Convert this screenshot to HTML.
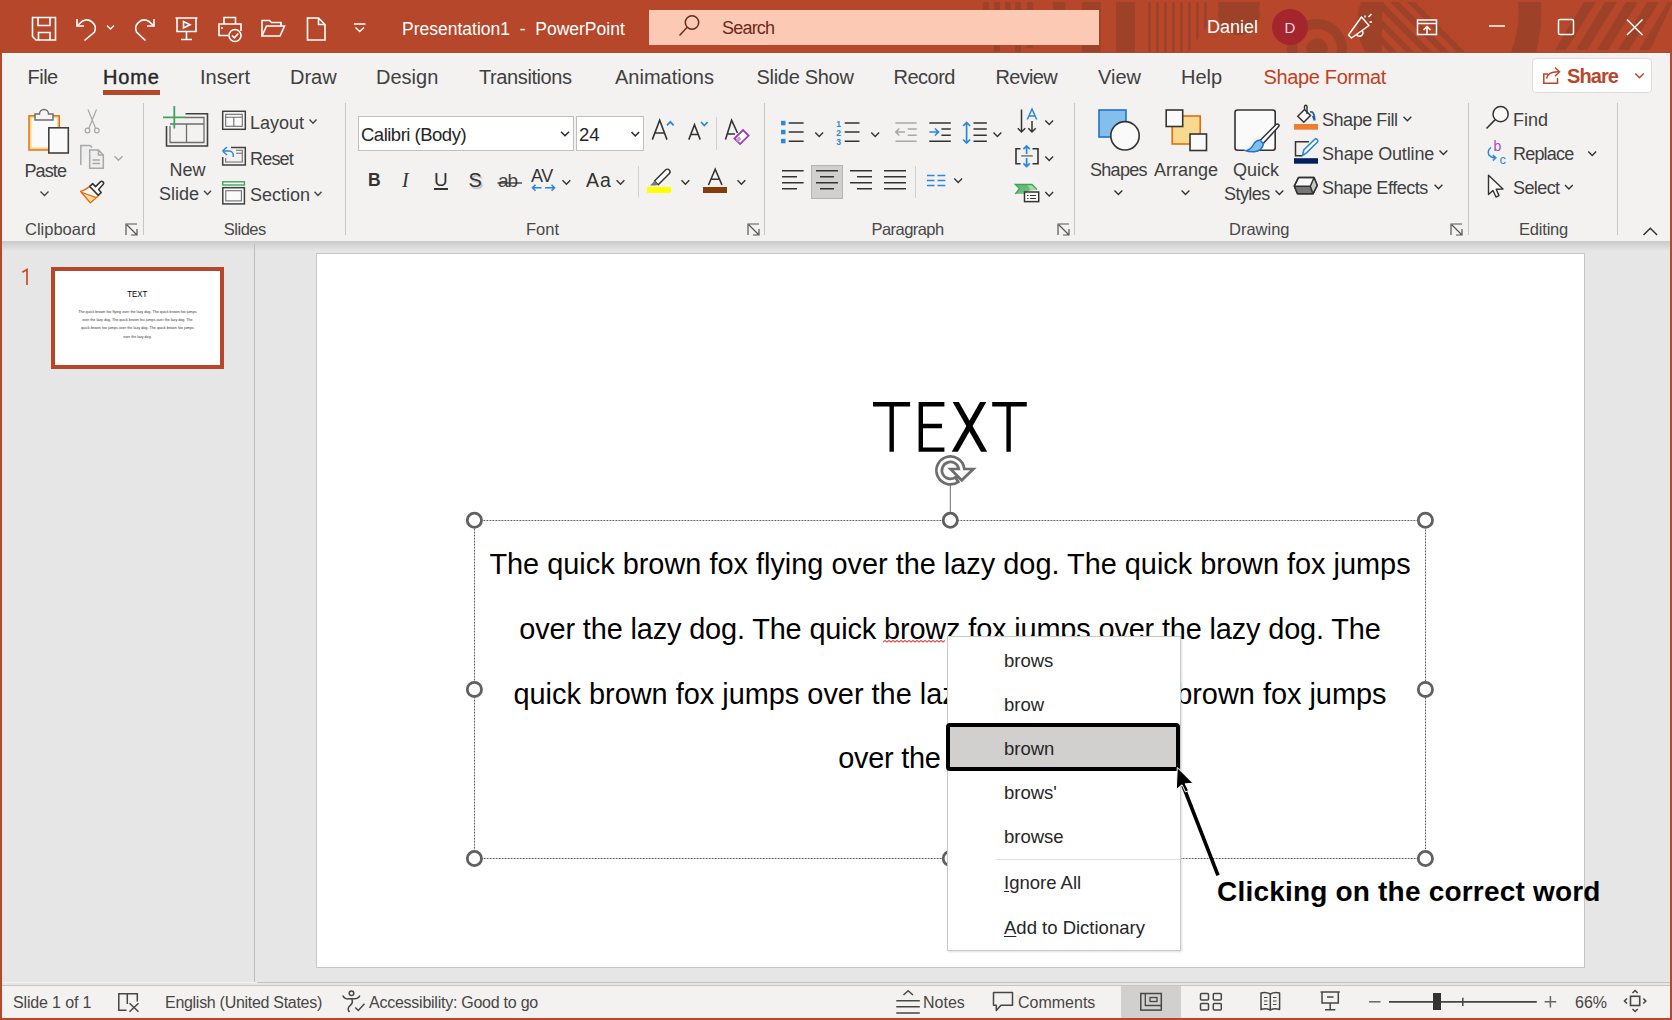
<!DOCTYPE html>
<html><head><meta charset="utf-8">
<style>
*{margin:0;padding:0;box-sizing:border-box}
html,body{width:1672px;height:1020px;overflow:hidden}
body{background:#B7472A;position:relative;font-family:"Liberation Sans",sans-serif;color:#424242}
.a{position:absolute}
.t{position:absolute;white-space:nowrap;line-height:1}
svg{position:absolute;overflow:visible}
#title{left:0;top:0;width:1672px;height:53px;background:#B7472A}
#ribbon{left:2px;top:53px;width:1668px;height:188px;background:#F3F2F1;border-top:1px solid #F9FBFB}
#main{left:2px;top:241px;width:1668px;height:741px;background:#E6E6E6}
#shadow{left:2px;top:241px;width:1668px;height:10px;background:linear-gradient(#CACACA,#E6E6E6)}
#status{left:2px;top:982px;width:1668px;height:36px;background:#F3F2F1}
.tab{font-size:20px;color:#404040;top:67px}
.lbl{font-size:16.5px;color:#484848;top:220.6px}
.rb{font-size:18px;color:#404040}
.sep{position:absolute;width:1px;background:#C8C6C4}
.mi{left:1004px;font-size:18.5px;color:#262626}
.bt{left:474px;width:952px;font-size:28.9px;text-align:center;color:#000}
.st{font-size:16px;color:#484644;top:994.5px}
</style></head>
<body>
<div id="title" class="a">
<svg style="left:0;top:0" width="1672" height="52" viewBox="0 0 1672 52">
<g fill="#9D4229">
<rect x="983.2" y="2" width="5.8" height="8"/><rect x="994" y="2" width="5.9" height="8"/><rect x="1005" y="2" width="5.8" height="8"/><rect x="1015.1" y="2" width="5.9" height="8"/><rect x="1027.1" y="2" width="5.9" height="8"/>
<polygon points="1052.5,2 1065.7,2 1065,10 1054,10"/><rect x="1082" y="2" width="18.8" height="50"/>
<rect x="994" y="44" width="5.9" height="7.5"/><rect x="1015.1" y="44" width="5.9" height="8"/><rect x="1027.1" y="44" width="5.9" height="3.7"/>
<rect x="1116" y="2" width="19" height="50"/>
<polygon points="1148,2 1150.7,2 1150.7,52 1148,52"/>
<polygon points="1156,2 1158.7,2 1158.7,52 1156,52"/>
<polygon points="1164,2 1166.7,2 1166.7,52 1164,52"/>
<polygon points="1172,2 1174.7,2 1174.7,52 1172,52"/>
<polygon points="1180,2 1182.7,2 1182.7,52 1180,52"/>
<polygon points="1188,2 1190.7,2 1190.7,49 1188,52"/>
<polygon points="1196,2 1198.7,2 1198.7,38 1196,41"/>
<polygon points="1204,2 1206.7,2 1206.7,27 1204,30"/>
<path d="M1218,2 A21,21 0 0 0 1260,2 Z M1218,2 L1260,2" />
<circle cx="1239" cy="14" r="21"/>
</g>
<g fill="none" stroke="#9D4229">
<circle cx="1317" cy="49" r="25" stroke-width="10"/>
</g>
<circle cx="1317" cy="49" r="10.7" fill="#9D4229"/>
<g fill="#9D4229">
<path d="M1361,2 L1384,2 L1382,8 L1382,52 L1365,52 Q1352,27 1361,2 Z"/>
<clipPath id="cr"><rect x="1382" y="2" width="120" height="50"/></clipPath>
<g clip-path="url(#cr)">
<polygon points="1322,2 1330,2 1380,52 1372,52"/>
<polygon points="1339,2 1347,2 1397,52 1389,52"/>
<polygon points="1356,2 1364,2 1414,52 1406,52"/>
<polygon points="1373,2 1382,2 1432,52 1423,52"/>
<polygon points="1390,2 1399,2 1449,52 1440,52"/>
<polygon points="1407,2 1415,2 1465,52 1457,52"/>
</g>
<path d="M1518,2 L1541,2 Q1543,25 1536,52 L1511,52 Q1521,25 1518,2 Z"/>
<polygon points="1584,2 1596,2 1566,50 1555,50"/>
<polygon points="1605,2 1617,2 1587,50 1576,50"/>
<polygon points="1626,2 1638,2 1608,50 1597,50"/>
<polygon points="1647,2 1659,2 1629,50 1618,50"/>
<polygon points="1668,2 1672,2 1672,4 1650,50 1639,50"/>
</g>
<rect x="0" y="0" width="1672" height="2" fill="#B7472A"/>
<rect x="1270" y="2" width="40" height="8" fill="none"/>
</svg>
<div class="a" style="left:649px;top:10px;width:450px;height:35px;background:#FCC9B4"></div>
<svg style="left:0;top:0" width="700" height="52" viewBox="0 0 700 52" fill="none" stroke="#fff" stroke-width="1.6" stroke-linejoin="miter">
<!-- save -->
<path d="M32.5,17.5 H55.5 V40 H36 L32.5,36.5 Z"/>
<path d="M38,17.5 V25.5 H50 V17.5"/>
<path d="M38.5,40 V32.5 H50 V40"/>
<!-- undo -->
<path d="M77,19 V26 H84"/>
<path d="M77,26 L82,21.5 A8.5,8.5 0 0 1 94.5,32 L84.5,40.5"/>
<path d="M107,25.5 L110.5,29 L114,25.5" stroke-width="1.3"/>
<!-- redo -->
<path d="M154,19 V26 H147"/>
<path d="M154,26 L149,21.5 A8.5,8.5 0 0 0 136.5,32 L145.5,40.5"/>
<!-- present -->
<path d="M175.5,18 H197.5 M177,18 V31.5 H196 V18 M186.5,31.5 V39.5 M181,39.5 H192"/>
<path d="M183.5,21.5 L190,24.8 L183.5,28 Z"/>
<!-- print -->
<path d="M224,24 V17.5 H235.5 V24"/>
<path d="M228,35.5 H219 V24 H241 V31"/>
<path d="M221,28 H223"/>
<circle cx="235" cy="35.5" r="6" fill="#B7472A"/>
<path d="M232,35.5 L234.3,37.8 L238.3,33.5"/>
<!-- open -->
<path d="M262,36 V20.5 H269.5 L271.5,22.5 H281 V26"/>
<path d="M262,36 L266.5,26 H284.5 L280,36 Z"/>
<!-- new -->
<path d="M307.5,18 H318.5 L325,24.5 V40 H307.5 Z M318.5,18 V24.5 H325"/>
<!-- customize -->
<path d="M354,24 H365.5" stroke-width="1.5"/>
<path d="M355.5,27.5 L359.7,31.5 L364,27.5" stroke-width="1.5"/>
<!-- search icon -->
<g stroke="#6B2A1C" stroke-width="1.5"><circle cx="692" cy="22.5" r="6.7"/><path d="M687.2,27.3 L679.5,35.5"/></g>
</svg>
<div class="t" style="left:402px;top:21px;font-size:17.5px;color:#fff">Presentation1&nbsp; - &nbsp;PowerPoint</div>
<div class="t" style="left:722px;top:18.5px;font-size:18px;color:#6B2A1C;letter-spacing:-0.8px">Search</div>
<div class="t" style="left:1207px;top:18px;font-size:18px;color:#fff">Daniel</div>
<div class="a" style="left:1272px;top:9px;width:36px;height:36px;border-radius:50%;background:#A4262C"></div>
<div class="t" style="left:1284.5px;top:20.3px;font-size:15px;color:#F4D7E4">D</div>
<svg style="left:1300px;top:0" width="372" height="52" viewBox="1300 0 372 52" fill="none" stroke="#fff" stroke-width="1.5">
<!-- megaphone -->
<path d="M1348.5,35 L1361.5,17 L1369,25.5 L1351.5,38 Z" stroke-linejoin="round"/>
<path d="M1356.5,34.5 A3.2,3.2 0 1 0 1362.5,31"/>
<path d="M1365,15.5 V17.5 M1368.5,17 L1371.5,14 M1369.5,22 H1372"/>
<!-- ribbon display -->
<path d="M1417.5,20 H1436.5 V34.5 H1417.5 Z M1417.5,23.5 H1436.5"/>
<path d="M1427,34.5 V26.5 M1423.5,30 L1427,26.5 L1430.5,30"/>
<!-- min -->
<path d="M1489,26 H1505"/>
<!-- max -->
<rect x="1558.5" y="19.5" width="15" height="15" rx="1.5"/>
<!-- close -->
<path d="M1627,19.5 L1642.5,35 M1642.5,19.5 L1627,35"/>
</svg>
</div>
<div id="ribbon" class="a"></div>
<div class="t tab" style="left:27.5px;letter-spacing:-0.5px">File</div>
<div class="t tab" style="left:103px;color:#262626;letter-spacing:0.8px;-webkit-text-stroke:0.4px #262626">Home</div>
<div class="a" style="left:103px;top:90px;width:57px;height:5px;background:#B7472A"></div>
<div class="t tab" style="left:200px">Insert</div>
<div class="t tab" style="left:290px">Draw</div>
<div class="t tab" style="left:376px">Design</div>
<div class="t tab" style="left:479px;letter-spacing:-0.4px">Transitions</div>
<div class="t tab" style="left:615px">Animations</div>
<div class="t tab" style="left:756.5px;letter-spacing:-0.3px">Slide Show</div>
<div class="t tab" style="left:893.5px;letter-spacing:-0.5px">Record</div>
<div class="t tab" style="left:995.5px;letter-spacing:-0.66px">Review</div>
<div class="t tab" style="left:1098px">View</div>
<div class="t tab" style="left:1181px">Help</div>
<div class="t tab" style="left:1263.5px;color:#C43E1C;letter-spacing:-0.35px">Shape Format</div>
<div class="a" style="left:1531.5px;top:57.5px;width:120px;height:35px;background:#fff;border:1px solid #DEDCDA;border-radius:4px"></div>
<div class="t" style="left:1567px;top:65.5px;font-size:20px;font-weight:bold;color:#B7472A;letter-spacing:-0.9px">Share</div>
<svg style="left:1500px;top:50px" width="172" height="50" viewBox="1500 50 172 50" fill="none" stroke="#B7472A" stroke-width="1.5">
<path d="M1548,74 H1543.8 V83.2 H1557.5 V78"/>
<path d="M1546.5,78.5 Q1548,71.5 1558.5,71.8"/>
<path d="M1555,67.5 L1559.5,71.8 L1555,76.2"/>
<path d="M1635.3,73.5 L1639.5,77.7 L1643.7,73.5"/>
</svg>
<!--TABS-->
<!-- separators -->
<div class="sep" style="left:143px;top:103px;height:132px"></div>
<div class="sep" style="left:345px;top:103px;height:132px"></div>
<div class="sep" style="left:764px;top:103px;height:132px"></div>
<div class="sep" style="left:1074px;top:103px;height:132px"></div>
<div class="sep" style="left:1468px;top:103px;height:132px"></div>
<div class="sep" style="left:1617px;top:103px;height:132px"></div>
<!-- group labels -->
<div class="t lbl" style="left:25px">Clipboard</div>
<div class="t lbl" style="left:223.8px;letter-spacing:-0.5px">Slides</div>
<div class="t lbl" style="left:526px">Font</div>
<div class="t lbl" style="left:871.5px;letter-spacing:-0.55px">Paragraph</div>
<div class="t lbl" style="left:1229px">Drawing</div>
<div class="t lbl" style="left:1519px;letter-spacing:-0.2px">Editing</div>
<!-- clipboard + slides text -->
<div class="t rb" style="left:24.5px;top:162px;letter-spacing:-0.9px">Paste</div>
<div class="t rb" style="left:169.5px;top:161.4px">New</div>
<div class="t rb" style="left:159px;top:184.8px">Slide</div>
<div class="t rb" style="left:250px;top:114px">Layout</div>
<div class="t rb" style="left:250px;top:149.8px;letter-spacing:-0.8px">Reset</div>
<div class="t rb" style="left:250px;top:186.4px">Section</div>
<svg style="left:0;top:0" width="350" height="250" viewBox="0 0 350 250" fill="none">
<!-- launcher -->
<g stroke="#555" stroke-width="1.2"><path d="M126,235 V224 H137 M127,225 L137,235 M131,235 H137 V229"/></g>
<!-- paste -->
<rect x="29" y="115.8" width="30.3" height="34.2" fill="#F8D98C" stroke="#E46C0A" stroke-width="1.4"/>
<rect x="31.5" y="118" width="25.5" height="29.5" fill="#FAFAFA"/>
<path d="M35,120 V114 H39.5 A4.5,4.5 0 0 1 48.5,114 H53 V120 Z" fill="#F5F5F5" stroke="#6E6E6E" stroke-width="1.5"/>
<rect x="48.8" y="127.8" width="19.5" height="25.2" fill="#FAFAFA" stroke="#404040" stroke-width="1.6"/>
<!-- chevrons -->
<g stroke="#444" stroke-width="1.4"><path d="M40.5,191.5 L44.5,195.5 L48.5,191.5"/>
<path d="M204,190.8 L207.5,194.5 L211,190.8"/>
<path d="M309.5,119.5 L313,123.3 L316.5,119.5"/>
<path d="M314.5,191.8 L318,195.5 L321.5,191.8"/></g>
<!-- scissors -->
<g stroke="#A6A6A6" stroke-width="1.2"><path d="M88,109.5 L95.8,129 M96.5,109.5 L88.5,129"/><circle cx="87.5" cy="130.5" r="2.3"/><circle cx="96.8" cy="130.5" r="2.3"/></g>
<!-- copy -->
<g stroke="#A8A8A8" stroke-width="1.5"><path d="M80.8,165 V145.5 H90 L92,147.5" fill="#EEE"/><path d="M89.7,168.2 V150 H98.5 L103.3,155 V168.2 Z" fill="#EEE"/><path d="M98.5,150 V155 H103.3 M92.5,160 H100 M92.5,163.5 H100"/></g>
<path d="M114.5,156.3 L118.5,160.3 L122.5,156.3" stroke="#A6A6A6" stroke-width="1.4"/>
<!-- format painter -->
<path d="M89.8,186.4 Q85,190.3 80.7,191.4 L90.4,202.7 L98.4,195.8 Z" fill="#FAFAFA" stroke="#E46C0A" stroke-width="1.5" stroke-linejoin="round"/>
<path d="M85.3,195.3 L95,197.9 L90.4,201.7 Z" fill="#F8D98C"/>
<path d="M81.6,192.3 L96,197.6" stroke="#E46C0A" stroke-width="1.3"/>
<path d="M89.8,186.4 L92.6,183.6 L95.6,186.6 L100.3,181.9 A1.9,1.9 0 0 1 103,184.6 L98.6,189.4 L101.2,192.4 L98.4,195.2 Z" fill="#FAFAFA" stroke="#333" stroke-width="1.5" stroke-linejoin="round"/>
<!-- new slide -->
<path d="M166.5,126 V146 H207.5 V113.8 H185.5" stroke="#404040" stroke-width="1.6"/>
<path d="M170,126 V142.5 H204 V117.5 H185.5 M170,124 H204 M186.5,124 V142.5" stroke="#6E6E6E" stroke-width="1.3"/>
<rect x="170.5" y="118" width="33" height="24" fill="#FAFAFA" opacity="0"/>
<path d="M174.3,106 V128.5 M163,117.3 H186" stroke="#3FA659" stroke-width="1.8"/>
<!-- layout -->
<rect x="222.7" y="111.3" width="22.6" height="18" stroke="#404040" stroke-width="1.5" fill="#FAFAFA"/>
<rect x="225.7" y="114.3" width="16.6" height="12" stroke="#6E6E6E" stroke-width="1.1"/>
<path d="M225.7,117.3 H242.3 M233.8,117.3 V126.3" stroke="#6E6E6E" stroke-width="1.1"/>
<!-- reset -->
<path d="M231,147.5 H245.3 V165 H222.7 V157" stroke="#404040" stroke-width="1.5" fill="none"/>
<path d="M236,150.3 H242.3 V162 H225.7 V158 M236,153.3 H242.3" stroke="#6E6E6E" stroke-width="1.1"/>
<path d="M222.5,151 L227,147 M222.5,151 L227,155 M223,151 H229 A4.3,4.3 0 0 1 233.3,155.3 V157" stroke="#2B88D8" stroke-width="1.5"/>
<!-- section -->
<rect x="222.8" y="181.8" width="21.6" height="3.2" stroke="#3FA659" stroke-width="1.4" fill="#FAFAFA"/>
<rect x="222.8" y="187.7" width="21.6" height="16.2" stroke="#404040" stroke-width="1.5" fill="#FAFAFA"/>
<rect x="225.8" y="190.7" width="15.6" height="10.2" stroke="#6E6E6E" stroke-width="1.1"/>
</svg>
<!-- FONT GROUP -->
<div class="a" style="left:358px;top:116px;width:216px;height:35px;background:#fff;border:1px solid #C2C0BE"></div>
<div class="a" style="left:576px;top:116px;width:68px;height:35px;background:#fff;border:1px solid #C2C0BE"></div>
<div class="t" style="left:361px;top:125.5px;font-size:18.5px;color:#262626;letter-spacing:-0.5px">Calibri (Body)</div>
<div class="t" style="left:579px;top:125.5px;font-size:18.5px;color:#262626">24</div>
<div class="t" style="left:368px;top:169.5px;font-size:19px;font-weight:bold;color:#333;transform:scaleX(0.92);transform-origin:0 0">B</div>
<div class="t" style="left:402px;top:169.5px;font-size:20px;font-family:'Liberation Serif',serif;font-style:italic;color:#333">I</div>
<div class="t" style="left:434px;top:170px;font-size:19px;color:#333">U</div>
<div class="a" style="left:434px;top:188px;width:14px;height:1.5px;background:#333"></div>
<div class="t" style="left:468.5px;top:169.5px;font-size:20px;color:#333;text-shadow:1.5px 1.5px 1px #bbb">S</div>
<div class="t" style="left:498px;top:171px;font-size:19px;color:#444;letter-spacing:-1px">ab</div>
<div class="t" style="left:531px;top:166.5px;font-size:18px;color:#333;letter-spacing:-0.5px">AV</div>
<div class="t" style="left:586px;top:171px;font-size:19.5px;color:#333;letter-spacing:1px">Aa</div>
<svg style="left:0;top:0" width="770" height="250" viewBox="0 0 770 250" fill="none">
<g stroke="#262626" stroke-width="1.5"><path d="M561,131.8 L565,135.8 L569,131.8"/><path d="M631.5,132 L635.3,136 L639.1,132"/></g>
<!-- grow/shrink -->
<g stroke="#333" stroke-width="1.6"><path d="M652.3,139.6 L659.7,120.2 L667,139.6 M655,133 H664.5"/><path d="M688.8,139.6 L694.5,124.8 L700.2,139.6 M690.8,134.5 H698.2"/></g>
<g stroke="#2B88D8" stroke-width="1.8"><path d="M667,125.3 L670.3,121.8 L673.6,125.3"/><path d="M701,122 L704.3,125.5 L707.6,122"/></g>
<path d="M725.5,139.6 L731.6,120.2 L737.5,133 M727.5,134 H735" stroke="#333" stroke-width="1.6"/>
<path d="M734.5,138.5 L743,130 L748.6,135.6 L740.1,144.1 Z" stroke="#9A3EB0" stroke-width="1.8" fill="#fff"/>
<path d="M735.8,139.8 L739,136.6 L741.4,139 L738.2,142.2 Z" fill="#C89AD6"/>
<!-- strike line -->
<path d="M497.5,183 H522" stroke="#333" stroke-width="1.3"/>
<!-- AV arrows -->
<g stroke="#2B88D8" stroke-width="1.6"><path d="M532.5,187.8 H541.5 M535.5,184.8 L532.5,187.8 L535.5,190.8"/><path d="M545,187.8 H554.5 M551.5,184.8 L554.5,187.8 L551.5,190.8"/></g>
<g stroke="#333" stroke-width="1.4"><path d="M562.5,180.3 L566.4,184.3 L570.3,180.3"/><path d="M616.6,180.3 L620.5,184.3 L624.4,180.3"/><path d="M681.5,180.3 L685.4,184.3 L689.3,180.3"/><path d="M737.5,180.3 L741.4,184.3 L745.3,180.3"/></g>
<!-- separators small -->
<path d="M716.5,117 V150 M638.5,166 V197.5" stroke="#D2D0CE" stroke-width="1"/>
<!-- highlighter -->
<path d="M654.5,181 L665.5,170 A2.6,2.6 0 0 1 669.2,173.7 L658.2,184.7 Z" stroke="#333" stroke-width="1.5" fill="#fff" stroke-linejoin="round"/>
<path d="M654.5,181 L650,185.5 L655,185.5 L658.2,184.7 Z" fill="#777"/>
<rect x="647" y="187" width="24" height="6" fill="#FFFF00"/>
<!-- font color -->
<path d="M708.5,185 L715.2,169.2 L722,185 M711,179.2 H719.5" stroke="#333" stroke-width="1.6"/>
<rect x="703" y="187" width="24" height="6" fill="#843C0C"/>
<!-- launcher -->
<g stroke="#555" stroke-width="1.2"><path d="M748,235 V224 H759 M749,225 L759,235 M753,235 H759 V229"/></g>
</svg>
<!-- PARAGRAPH GROUP -->
<div class="a" style="left:811px;top:165px;width:32px;height:34px;background:#D2D0CE;border:1px solid #B5B3B1"></div>
<svg style="left:0;top:0" width="1080" height="250" viewBox="0 0 1080 250" fill="none">
<!-- bullets -->
<g fill="#2B88D8"><rect x="781" y="120.8" width="4.5" height="4.5"/><rect x="781" y="129.8" width="4.5" height="4.5"/><rect x="781" y="138.8" width="4.5" height="4.5"/></g>
<path d="M788.7,123 H803.6 M788.7,132 H803.6 M788.7,141.2 H803.6" stroke="#333" stroke-width="1.5"/>
<!-- numbering -->
<g font-family="Liberation Sans" font-size="8.6" font-weight="bold" fill="#2B88D8">
<text x="836.2" y="127">1</text><text x="836.2" y="136">2</text><text x="836.2" y="145">3</text></g>
<path d="M844.7,123 H859.5 M844.7,132 H859.5 M844.7,141.2 H859.5" stroke="#333" stroke-width="1.5"/>
<!-- decrease indent -->
<path d="M895.4,123 H916.7 M907.7,129 H916.7 M907.7,135.2 H916.7 M895.4,141.2 H916.7" stroke="#A8A8A8" stroke-width="1.5"/>
<path d="M895.8,132 H905 M899.3,128.5 L895.8,132 L899.3,135.5" stroke="#A8A8A8" stroke-width="1.6"/>
<!-- increase indent -->
<path d="M929.3,123 H950.8 M941.4,129 H950.8 M941.4,135.2 H950.8 M929.3,141.2 H950.8" stroke="#333" stroke-width="1.5"/>
<path d="M929.3,132 H938.5 M935,128.5 L938.5,132 L935,135.5" stroke="#2B88D8" stroke-width="1.7"/>
<!-- line spacing -->
<path d="M966.6,122.5 V143 M963.1,126 L966.6,122.5 L970.1,126 M963.1,139.5 L966.6,143 L970.1,139.5" stroke="#2B88D8" stroke-width="1.7"/>
<path d="M973.5,123 H986.8 M973.5,129 H986.8 M973.5,135.2 H986.8 M973.5,141.2 H986.8" stroke="#333" stroke-width="1.5"/>
<!-- chevrons -->
<g stroke="#333" stroke-width="1.4"><path d="M815.3,132.5 L819.2,136.5 L823.1,132.5"/><path d="M871.3,132.5 L875.2,136.5 L879.1,132.5"/><path d="M993.5,132.5 L997.4,136.5 L1001.3,132.5"/>
<path d="M1045.3,120.5 L1049.2,124.5 L1053.1,120.5"/><path d="M1045.3,156.5 L1049.2,160.5 L1053.1,156.5"/><path d="M1045.3,192 L1049.2,196 L1053.1,192"/><path d="M954.3,178.5 L958.2,182.5 L962.1,178.5"/></g>
<!-- text direction -->
<path d="M1021.5,109.5 V132 M1017.8,128.3 L1021.5,132 L1025.2,128.3 M1032,121 V132 M1028.3,128.3 L1032,132 L1035.7,128.3" stroke="#333" stroke-width="1.5"/>
<path d="M1027.3,119.5 L1032,109 L1036.7,119.5 M1028.9,116 H1035.1" stroke="#2B88D8" stroke-width="1.5"/>
<!-- align text -->
<path d="M1020.5,148.8 H1016 V163.8 H1020.5 M1032.5,148.8 H1038 V163.8 H1032.5" stroke="#333" stroke-width="1.6"/>
<path d="M1021.2,155.9 H1032.8" stroke="#777" stroke-width="1.5"/>
<path d="M1026.6,146 V154 M1023.4,149.2 L1026.6,146 L1029.8,149.2 M1026.6,158 V166.5 M1023.4,163.3 L1026.6,166.5 L1029.8,163.3" stroke="#2B88D8" stroke-width="1.7"/>
<!-- smartart -->
<path d="M1015.3,194 L1019.5,188.5 L1015.3,184.5 H1032 L1037,189.5" fill="#A6D8A8" stroke="#3FA659" stroke-width="1.3"/>
<path d="M1015.3,194 L1019.5,188.5 L1015.3,184.5 L1027,184.5 L1030,189 L1026,194 Z" fill="#3FA659" opacity="0.6"/>
<rect x="1024.5" y="192" width="14.2" height="9.6" fill="#fff" stroke="#333" stroke-width="1.5"/>
<path d="M1027,195.5 H1028.5 M1030,195.5 H1036 M1027,198.5 H1028.5 M1030,198.5 H1036" stroke="#333" stroke-width="1.1"/>
<!-- align left/center/right/justify -->
<path d="M782,170.8 H803.6 M782,176.8 H797 M782,182.8 H803.6 M782,188.8 H797" stroke="#333" stroke-width="1.5"/>
<path d="M816,170.8 H838 M820,176.8 H834 M816,182.8 H838 M820,188.8 H834" stroke="#333" stroke-width="1.5"/>
<path d="M850,170.8 H872 M857,176.8 H872 M850,182.8 H872 M857,188.8 H872" stroke="#333" stroke-width="1.5"/>
<path d="M884,170.8 H906 M884,176.8 H906 M884,182.8 H906 M884,188.8 H906" stroke="#333" stroke-width="1.5"/>
<path d="M915.5,166 V198" stroke="#D2D0CE" stroke-width="1"/>
<!-- columns -->
<path d="M927,175.5 H934.5 M927,180.5 H934.5 M927,185.5 H934.5 M937.5,175.5 H945.3 M937.5,180.5 H945.3 M937.5,185.5 H945.3" stroke="#2B88D8" stroke-width="1.7"/>
<!-- launcher -->
<g stroke="#555" stroke-width="1.2"><path d="M1058,235 V224 H1069 M1059,225 L1069,235 M1063,235 H1069 V229"/></g>
</svg>
<!-- DRAWING + EDITING -->
<div class="t rb" style="left:1090px;top:161px;letter-spacing:-0.7px">Shapes</div>
<div class="t rb" style="left:1154px;top:161px">Arrange</div>
<div class="t rb" style="left:1233px;top:161px">Quick</div>
<div class="t rb" style="left:1224px;top:185px;letter-spacing:-0.55px">Styles</div>
<div class="t rb" style="left:1322px;top:110.5px;letter-spacing:-0.45px">Shape Fill</div>
<div class="t rb" style="left:1322px;top:144.5px;letter-spacing:-0.15px">Shape Outline</div>
<div class="t rb" style="left:1322px;top:178.8px;letter-spacing:-0.45px">Shape Effects</div>
<div class="t rb" style="left:1513px;top:110.5px">Find</div>
<div class="t rb" style="left:1513px;top:145.3px;letter-spacing:-0.8px">Replace</div>
<div class="t rb" style="left:1513px;top:179px;letter-spacing:-0.6px">Select</div>
<svg style="left:0;top:0" width="1672" height="250" viewBox="0 0 1672 250" fill="none">
<!-- shapes -->
<rect x="1099" y="110" width="27" height="27" fill="#83BEEC" stroke="#1E74C8" stroke-width="1.6"/>
<circle cx="1125" cy="135.8" r="14.2" fill="#FAFAFA" stroke="#333" stroke-width="1.6"/>
<!-- arrange -->
<rect x="1172.2" y="116" width="28" height="28" fill="#F8DA8E" stroke="#E46C0A" stroke-width="1.6"/>
<rect x="1166.2" y="110" width="16.5" height="16.5" fill="#FAFAFA" stroke="#333" stroke-width="1.6"/>
<rect x="1190" y="134" width="16.5" height="16.5" fill="#FAFAFA" stroke="#333" stroke-width="1.6"/>
<!-- quick styles -->
<rect x="1235" y="110" width="40.2" height="40.2" rx="2.5" fill="#FAFAFA" stroke="#333" stroke-width="1.6"/>
<path d="M1244,150.5 L1256,152 L1262,140 L1254,138 Z" fill="#F3F2F1"/>
<path d="M1260,140.5 L1276,124.5 A1.6,1.6 0 0 1 1278.5,126.8 L1263.2,143.5" fill="#FAFAFA" stroke="#333" stroke-width="1.5"/>
<path d="M1260.2,140.3 L1263.5,143.7 Q1262.5,151 1254,151.8 Q1249,152 1246,150.8 Q1251,149.5 1253.5,144.5 Q1256,140 1260.2,140.3 Z" fill="#83BEEC" stroke="#1E74C8" stroke-width="1.5"/>
<!-- shape fill -->
<path d="M1297.8,116.2 L1304.5,109.5 L1310.5,115.5 L1303.8,122.2 Z" fill="#FAFAFA" stroke="#333" stroke-width="1.5"/>
<path d="M1304.5,109.5 V106.5 A1.2,1.2 0 0 1 1307,106.5 V114" stroke="#333" stroke-width="1.4"/>
<path d="M1310,112 Q1314,111 1314.5,118 L1312.8,116 L1314.5,120.5" stroke="#1E5FAA" stroke-width="1.8"/>
<rect x="1294" y="124" width="24" height="5.7" fill="#ED7D31"/>
<!-- shape outline -->
<path d="M1309,141.8 H1295.5 V155.8 H1302" stroke="#333" stroke-width="1.5"/>
<path d="M1302.5,155.5 L1303.8,150 L1314.5,139.5 A1.8,1.8 0 0 1 1317.2,142.2 L1306.5,152.8 Z" fill="#fff" stroke="#2B88D8" stroke-width="1.6"/>
<rect x="1294" y="158.2" width="24" height="5.5" fill="#002060"/>
<!-- shape effects -->
<path d="M1298.5,177.5 H1314 L1317.2,185.3 L1313,193.8 H1297.5 L1294.3,186 Z" fill="#FAFAFA" stroke="#333" stroke-width="1.5" stroke-linejoin="round"/>
<path d="M1294.8,186.5 H1310.3 L1313,193.8 H1297.5 Z" fill="#777"/>
<path d="M1310.3,186.5 L1314,177.8 L1317,185.3 L1313,193.8 Z" fill="#C8C8C8"/>
<path d="M1298.5,177.5 H1314 L1317.2,185.3 L1313,193.8 H1297.5 L1294.3,186 Z M1294.5,186.2 H1310.3 L1314,177.8 M1310.3,186.2 L1313,193.8" stroke="#333" stroke-width="1.5" stroke-linejoin="round"/>
<!-- chevrons -->
<g stroke="#333" stroke-width="1.4"><path d="M1114.5,190.5 L1118.4,194.5 L1122.3,190.5"/><path d="M1181.6,190.5 L1185.5,194.5 L1189.4,190.5"/><path d="M1275.5,190.5 L1279.4,194.5 L1283.3,190.5"/>
<path d="M1403.5,116.8 L1407.4,120.8 L1411.3,116.8"/><path d="M1439.5,150.5 L1443.4,154.5 L1447.3,150.5"/><path d="M1434.6,184.8 L1438.5,188.8 L1442.4,184.8"/>
<path d="M1588.3,151.5 L1592.2,155.5 L1596.1,151.5"/><path d="M1565,185 L1568.9,189 L1572.8,185"/></g>
<path d="M1643.5,235 L1650.3,228.2 L1657.1,235" stroke="#333" stroke-width="1.5"/>
<!-- launcher -->
<g stroke="#555" stroke-width="1.2"><path d="M1451,235 V224 H1462 M1452,225 L1462,235 M1456,235 H1462 V229"/></g>
<!-- find -->
<circle cx="1500.6" cy="114.2" r="7.6" fill="#FAFAFA" stroke="#333" stroke-width="1.5"/>
<path d="M1495.2,119.6 L1486.5,128.5" stroke="#333" stroke-width="1.6"/>
<!-- replace -->
<text x="1493.5" y="151.2" font-family="Liberation Sans" font-size="14" fill="#B146C2">b</text>
<text x="1499.5" y="163.7" font-family="Liberation Sans" font-size="13" fill="#2B88D8">c</text>
<path d="M1491,147.5 Q1487.5,150 1488.5,154 Q1489.5,157.5 1495.8,157.8 M1492.8,155 L1495.8,157.8 L1492.8,160.6" stroke="#2B88D8" stroke-width="1.5"/>
<!-- select -->
<path d="M1488.5,175.3 V194.5 L1493,190.5 L1496,197 L1499,195.6 L1496.2,189.3 L1503,189 Z" fill="#FAFAFA" stroke="#333" stroke-width="1.4" stroke-linejoin="round"/>
</svg>
<!--RIBBON-->
<div id="main" class="a"></div>
<div id="shadow" class="a"></div>
<div class="a" style="left:254px;top:244px;width:1px;height:739px;background:#BDBDBD"></div>
<!-- thumbnail -->
<svg style="left:0;top:260px" width="40" height="30" viewBox="0 260 40 30"><path d="M22.3,272.3 L27,269.5 V284.9" fill="none" stroke="#D04726" stroke-width="1.7"/></svg>
<div class="a" style="left:51px;top:267px;width:173px;height:102px;border:4px solid #B7472A;background:#fff"></div>
<svg style="left:0;top:0" width="260" height="400" viewBox="0 0 260 400">
<text x="137.3" y="297.3" text-anchor="middle" font-family="Liberation Sans" font-size="8.8" fill="#000" textLength="20" lengthAdjust="spacingAndGlyphs">TEXT</text>
<g font-family="Liberation Sans" font-size="4.3" fill="#333" text-anchor="middle">
<text x="137.4" y="313.3" textLength="118.5" lengthAdjust="spacingAndGlyphs">The quick brown fox flying over the lazy dog. The quick brown fox jumps</text>
<text x="137.4" y="321.3" textLength="110.5" lengthAdjust="spacingAndGlyphs">over the lazy dog. The quick brown fox jumps over the lazy dog. The</text>
<text x="137.4" y="329.3" textLength="113" lengthAdjust="spacingAndGlyphs">quick brown fox jumps over the lazy dog. The quick brown fox jumps</text>
<text x="137.4" y="338.3" textLength="28.5" lengthAdjust="spacingAndGlyphs">over the lazy dog.</text>
</g>
</svg>
<!-- slide -->
<div class="a" style="left:316px;top:253px;width:1269px;height:715px;background:#fff;border:1px solid #C6C6C6"></div>
<svg style="left:0;top:0" width="1672" height="1020" viewBox="0 0 1672 1020" fill="none">
<!-- TEXT title -->
<g stroke="#000" stroke-width="4.4" stroke-linecap="butt" stroke-linejoin="miter">
<path d="M873,404.2 H910.1 M891.7,404.2 V451.8"/>
<path d="M944.4,404.2 H920.8 V449.6 H944.4 M920.8,426 H942"/>
<path d="M992.2,404.2 H1026.8 M1008.6,404.2 V451.8"/>
</g>
<polygon points="952.7,402 958.9,402 987.2,451.8 981,451.8" fill="#000"/>
<polygon points="980.1,402 986.3,402 957.9,451.8 951.7,451.8" fill="#000"/>
<!-- rotate handle -->
<path d="M958.4,481.9 A14,14 0 1 1 964.3,469 L973.4,469 L961.7,480.3 L950.5,469 L958.8,469 A8.5,8.5 0 1 0 955.3,477.4 Z" fill="#fff" stroke="#6E6E6E" stroke-width="2.7" stroke-linejoin="miter"/>
<path d="M950.3,484.7 V512.3" stroke="#6E6E6E" stroke-width="1"/>
<!-- textbox border -->
<rect x="474.5" y="520.5" width="951" height="338" stroke="#5A5A5A" stroke-width="1" stroke-dasharray="1.8,1.2"/>
<g fill="#fff" stroke="#606060" stroke-width="2.8">
<circle cx="474.4" cy="520.3" r="7.1"/><circle cx="950.3" cy="520.3" r="7.1"/><circle cx="1425.4" cy="520.3" r="7.1"/>
<circle cx="474.4" cy="689.4" r="7.1"/><circle cx="1425.4" cy="689.4" r="7.1"/>
<circle cx="474.4" cy="858.5" r="7.1"/><circle cx="950.3" cy="858.5" r="7.1"/><circle cx="1425.4" cy="858.5" r="7.1"/>
</g>
<!-- squiggle -->
<path d="M883,642 l2,-1.5 l2,1.5 l2,-1.5 l2,1.5 l2,-1.5 l2,1.5 l2,-1.5 l2,1.5 l2,-1.5 l2,1.5 l2,-1.5 l2,1.5 l2,-1.5 l2,1.5 l2,-1.5 l2,1.5 l2,-1.5 l2,1.5 l2,-1.5 l2,1.5 l2,-1.5 l2,1.5 l2,-1.5 l2,1.5 l2,-1.5 l2,1.5 l2,-1.5 l2,1.5 l2,-1.5 l2,1.5 l2,-1.5" stroke="#E55050" stroke-width="1.1"/>
</svg>
<div class="t bt" style="top:550.3px">The quick brown fox flying over the lazy dog. The quick brown fox jumps</div>
<div class="t bt" style="top:615px;letter-spacing:-0.144px">over the lazy dog. The quick browz fox jumps over the lazy dog. The</div>
<div class="t bt" style="top:679.7px">quick brown fox jumps over the lazy dog. The quick brown fox jumps</div>
<div class="t bt" style="top:744.4px;letter-spacing:-0.25px">over the lazy dog.</div>
<!-- context menu -->
<div class="a" style="left:947px;top:636px;width:234px;height:315px;background:#fff;border:1px solid #C8C8C8;box-shadow:1px 1px 2px rgba(0,0,0,0.12)"></div>
<div class="a" style="left:946px;top:723px;width:233.5px;height:48px;background:#D1D0CF;border:4.2px solid #000;border-radius:4px"></div>
<div class="a" style="left:996px;top:859px;width:184px;height:1px;background:#E1DFDD"></div>
<div class="t mi" style="top:651.9px">brows</div>
<div class="t mi" style="top:696px">brow</div>
<div class="t mi" style="top:740.1px">brown</div>
<div class="t mi" style="top:784.2px">brows'</div>
<div class="t mi" style="top:828.3px">browse</div>
<div class="t mi" style="top:874px"><u style="text-decoration-thickness:1px;text-underline-offset:2px">I</u>gnore All</div>
<div class="t mi" style="top:919px"><u style="text-decoration-thickness:1px;text-underline-offset:2px">A</u>dd to Dictionary</div>
<!-- annotation -->
<svg style="left:0;top:0" width="1672" height="1020" viewBox="0 0 1672 1020">
<path d="M1183,785.5 L1218,875.4" stroke="#000" stroke-width="3.6"/>
<path d="M1177.3,767.5 L1176.3,789.5 L1182,784.8 L1185.5,792 L1188.5,790.5 L1185.2,783.8 L1193,783.3 Z" fill="#000" stroke="#fff" stroke-width="1"/>
</svg>
<div class="t" style="left:1217px;top:877.5px;font-size:28px;font-weight:bold;color:#000;letter-spacing:0.2px">Clicking on the correct word</div>
<!--MAIN2-->
<div id="status" class="a"></div>
<div class="a" style="left:257px;top:982px;width:1413px;height:1px;background:#C4C4C4"></div>
<div class="a" style="left:2px;top:983px;width:1668px;height:2px;background:#E6E6E6"></div>
<div class="a" style="left:2px;top:985px;width:1668px;height:1px;background:#C8C6C4"></div>
<div class="a" style="left:1121px;top:986px;width:60px;height:32px;background:#D2D0CE"></div>
<div class="t st" style="left:13px;letter-spacing:-0.15px">Slide 1 of 1</div>
<div class="t st" style="left:165px;letter-spacing:-0.29px">English (United States)</div>
<div class="t st" style="left:369px;letter-spacing:-0.25px">Accessibility: Good to go</div>
<div class="t st" style="left:923px">Notes</div>
<div class="t st" style="left:1018px">Comments</div>
<div class="t st" style="left:1575px">66%</div>
<svg style="left:0;top:0" width="1672" height="1020" viewBox="0 0 1672 1020" fill="none" stroke="#484644" stroke-width="1.5">
<!-- spell icon -->
<path d="M127.3,993.8 H118.8 V1010.3 H126.5 M127.3,993.8 V1004 M127.3,993.8 H137.3 V1001.5"/>
<path d="M129.5,1003.3 L138.5,1011.8 M138.5,1003.3 L129.5,1011.8"/>
<!-- accessibility -->
<circle cx="351.5" cy="993.3" r="2.3"/>
<path d="M342.8,995.5 Q344.5,999.5 349,998.8 H354 Q358.5,999 359.8,995.5"/>
<path d="M351.8,999 Q353.5,1003 350.3,1005.3 Q346.5,1008.3 349.5,1012"/>
<path d="M355.3,1007.5 L358.3,1010.5 L364.5,1003.8"/>
<!-- notes -->
<path d="M903.5,995 L908.2,990.8 L912.9,995 M896.3,1000.7 H919.8 M896.3,1006.8 H919.8 M896.3,1013 H919.8"/>
<!-- comments -->
<path d="M993.5,992.5 H1012.5 V1005.3 H1001 L996.3,1010.5 V1005.3 H993.5 Z" stroke-linejoin="round"/>
<!-- normal view -->
<rect x="1140.8" y="993.5" width="20.5" height="16.6"/>
<path d="M1145.3,993.5 V1005.5 H1161.3" stroke-width="1.3"/>
<rect x="1150" y="997.5" width="7" height="4" stroke-width="1.3"/>
<!-- sorter -->
<rect x="1200.5" y="993.5" width="8" height="6.5" rx="1"/><rect x="1213.3" y="993.5" width="8" height="6.5" rx="1"/>
<rect x="1200.5" y="1003.5" width="8" height="6.5" rx="1"/><rect x="1213.3" y="1003.5" width="8" height="6.5" rx="1"/>
<!-- reading -->
<path d="M1261,993 Q1266,991.5 1270.3,994 Q1274.6,991.5 1279.6,993 V1009.5 Q1274.6,1008 1270.3,1010 Q1266,1008 1261,1009.5 Z M1270.3,994 V1010" stroke-linejoin="round"/>
<path d="M1264,997.5 H1267.5 M1264,1001 H1267.5 M1264,1004.5 H1267.5 M1273,997.5 H1276.5 M1273,1001 H1276.5 M1273,1004.5 H1276.5" stroke-width="1.2"/>
<!-- slideshow -->
<path d="M1320.5,992 H1339.8 M1322,992 V1003 H1338.3 V992 M1330.2,1003 V1009.8 M1325,1009.8 H1335.3 M1327,997 H1333.5"/>
<!-- zoom -->
<path d="M1369,1001.8 H1380.5" stroke="#666"/>
<path d="M1389,1001.8 H1536.8" stroke="#444" stroke-width="1.8"/>
<rect x="1433" y="993" width="8" height="17" fill="#333" stroke="none"/>
<path d="M1462.8,997.8 V1006" stroke="#444"/>
<path d="M1544.6,1001.8 H1556.2 M1550.4,996 V1007.5" stroke="#666"/>
<!-- fit -->
<rect x="1630.5" y="996.3" width="9.2" height="9.2" stroke-width="1.6"/>
<path d="M1632.5,993 L1635.1,990.5 L1637.7,993 M1632.5,1009 L1635.1,1011.5 L1637.7,1009 M1627,998.5 L1624.5,1001 L1627,1003.5 M1643.3,998.5 L1645.8,1001 L1643.3,1003.5" stroke-width="1.6"/>
</svg>
<!--STATUS-->
</body></html>
